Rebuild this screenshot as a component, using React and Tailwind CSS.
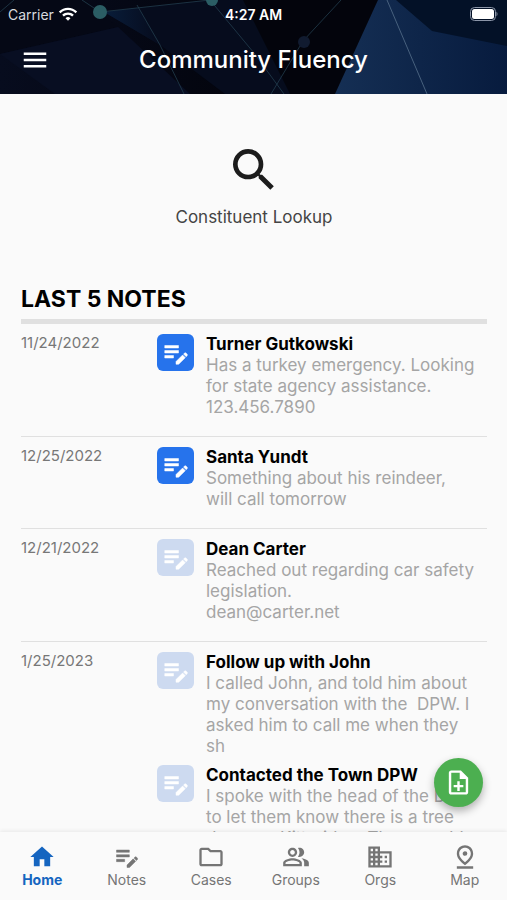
import { MdMenu, MdSearch, MdHome, MdOutlineFolder, MdOutlineDomain, MdOutlinePinDrop, MdOutlineNoteAdd, MdWifi } from "react-icons/md";

const groups = [
  {
    date: "11/24/2022",
    notes: [{ title: "Turner Gutkowski", unread: true, lines: ["Has a turkey emergency. Looking", "for state agency assistance.", "123.456.7890"] }],
  },
  {
    date: "12/25/2022",
    notes: [{ title: "Santa Yundt", unread: true, lines: ["Something about his reindeer,", "will call tomorrow"] }],
  },
  {
    date: "12/21/2022",
    notes: [{ title: "Dean Carter", lines: ["Reached out regarding car safety", "legislation.", "dean@carter.net"] }],
  },
  {
    date: "1/25/2023",
    notes: [
      { title: "Follow up with John", lines: ["I called John, and told him about", "my conversation with the  DPW. I", "asked him to call me when they", "sh"] },
      { title: "Contacted the Town DPW", lines: ["I spoke with the head of the DPW", "to let them know there is a tree", "down on Kitteridge. There could"] },
    ],
  },
];

function EditNoteIcon({ className }) {
  return (
    <svg className={className} viewBox="0 0 24 24" fill="currentColor" stroke="currentColor" strokeWidth="0.4" aria-hidden="true">
      <path d="M3 10h11v2H3zM3 6h11v2H3zM3 14h7v2H3z" />
      <path d="M18.010 12.870l.71-.71c.39-.39 1.020-.39 1.410 0l.71.71c.39.39.39 1.020 0 1.410l-.71.71z" />
      <path d="M17.300 13.580l-5.300 5.300V21h2.120l5.300-5.300z" />
    </svg>
  );
}

function PeopleIcon({ className }) {
  return (
    <svg className={className} viewBox="0 0 24 24" fill="currentColor" aria-hidden="true">
      <path d="M16.670 13.130C18.040 14.060 19 15.320 19 17v3h4v-3c0-2.180-3.570-3.470-6.330-3.870z" />
      <path d="M15 12c2.210 0 4-1.790 4-4s-1.790-4-4-4c-.47 0-.91.1-1.330.24C14.500 5.270 15 6.580 15 8s-.5 2.730-1.330 3.760c.42.14.86.24 1.330.24z" />
      <path fillRule="evenodd" d="M9 12c2.210 0 4-1.790 4-4s-1.790-4-4-4-4 1.790-4 4 1.790 4 4 4zm0-6c1.100 0 2 .9 2 2s-.9 2-2 2-2-.9-2-2 .9-2 2-2z" />
      <path fillRule="evenodd" d="M9 13c-2.670 0-8 1.340-8 4v3h16v-3c0-2.660-5.330-4-8-4zm6 5H3v-.99C3.200 16.290 6.300 15 9 15s5.800 1.290 6 2v1z" />
    </svg>
  );
}

const tabs = [
  { label: "Home", Icon: MdHome, active: true },
  { label: "Notes", Icon: EditNoteIcon },
  { label: "Cases", Icon: MdOutlineFolder },
  { label: "Groups", Icon: PeopleIcon },
  { label: "Orgs", Icon: MdOutlineDomain },
  { label: "Map", Icon: MdOutlinePinDrop },
];

function HeaderArt() {
  return (
    <svg className="absolute inset-0 h-full w-full" viewBox="0 0 507 94" preserveAspectRatio="none" aria-hidden="true">
      <defs>
        <linearGradient id="base" x1="0" x2="1">
          <stop offset="0" stopColor="#070c1e" />
          <stop offset="0.5" stopColor="#03040c" />
          <stop offset="0.7" stopColor="#03040c" />
        </linearGradient>
        <linearGradient id="ray" x1="0" x2="1">
          <stop offset="0" stopColor="#152f54" />
          <stop offset="1" stopColor="#071b3e" />
        </linearGradient>
        <linearGradient id="facet" x1="0" x2="1">
          <stop offset="0" stopColor="#091d3a" />
          <stop offset="1" stopColor="#060b1c" />
        </linearGradient>
      </defs>
      <rect width="507" height="94" fill="url(#base)" />
      <path d="M0 0H85L118 27L0 54Z" fill="#050815" />
      <path d="M0 54L118 27L190 94H55Z" fill="#080e22" />
      <path d="M104 12L210 0H243L290 94H225L160 45Z" fill="#060c1d" />
      <path d="M104 12L138 8L160 45Z" fill="url(#facet)" />
      <path d="M378 0H507V94H335Z" fill="url(#ray)" />
      <path d="M396 0H507V46L432 31Z" fill="#031127" />
      <path d="M14 0L0 12M82 0L100 12L210 0L254 53L284 94M137 5L160 45L184 94M341 0L303 41L271 94" fill="none" stroke="#264456" strokeWidth="1" opacity="0.7" />
      <path d="M387 0L427 94" stroke="#48617e" strokeWidth="1" />
      <circle cx="100" cy="12" r="7" fill="#2b5d64" />
      <circle cx="212" cy="0" r="6" fill="#2b5d64" />
      <circle cx="304" cy="42" r="6" fill="#111b30" />
    </svg>
  );
}

function Battery() {
  return (
    <svg className="h-4 w-8" viewBox="0 0 32 16" aria-label="Battery full" role="img">
      <rect x="3.5" y="1.5" width="25" height="13" rx="4" fill="none" stroke="#8b95a8" />
      <rect x="5" y="3" width="22" height="10" rx="2.5" fill="#fff" />
      <path d="M29.500 5.500Q31.500 8 29.500 10.500Z" fill="#8b95a8" />
    </svg>
  );
}

function Note({ title, lines, unread }) {
  return (
    <article className="flex gap-3">
      <div className={`flex size-[37px] shrink-0 items-center justify-center rounded-md text-white ${unread ? "bg-[#2673ec]" : "bg-[#cddaf0]"}`}>
        <EditNoteIcon className="size-[30px]" />
      </div>
      <div className="min-w-0 whitespace-pre">
        <h3 className="text-[17px] leading-[21px] font-bold text-black">{title}</h3>
        {lines.map((line) => (
          <p key={line} className="text-[17px] leading-[21px] text-[#a5a5a5]">{line}</p>
        ))}
      </div>
    </article>
  );
}

export default function App() {
  return (
    <div className="relative flex h-screen flex-col overflow-hidden bg-[#fafafa] font-['Inter','Liberation_Sans',sans-serif]">
      <header className="relative h-[94px] shrink-0 overflow-hidden text-white">
        <HeaderArt />
        <div className="relative grid h-7 grid-cols-3 items-center px-2 text-[14px]">
          <div className="flex items-center gap-1 text-[#d8dade]">
            <span>Carrier</span>
            <MdWifi className="size-5 text-white" aria-label="Wi-Fi" />
          </div>
          <span className="text-center font-semibold">4:27 AM</span>
          <span className="flex justify-end"><Battery /></span>
        </div>
        <div className="relative grid h-16 grid-cols-[70px_1fr_70px] items-center">
          <button type="button" aria-label="Open menu" className="flex justify-center">
            <MdMenu className="size-[30px]" />
          </button>
          <h1 className="text-center text-2xl font-medium">Community Fluency</h1>
        </div>
      </header>

      <main className="min-h-0 flex-1 overflow-hidden pr-5 pl-[21px]">
        <div className="flex justify-center pt-12">
          <button type="button" className="flex flex-col items-center gap-[9px] text-[#444]">
            <MdSearch className="size-[56px] text-[#1c1c1c]" aria-hidden="true" />
            <span className="text-[17px] leading-[21px]">Constituent Lookup</span>
          </button>
        </div>
        <section className="pt-[58px]">
          <h2 className="border-b-[5px] border-[#e0e0e0] pb-[7px] text-[23px] leading-[26px] font-bold text-black">LAST 5 NOTES</h2>
          {groups.map((group) => (
            <div key={group.date} className="flex border-b border-[#e0e0e0] pt-[10px] pb-[18px]">
              <time className="w-[136px] shrink-0 text-[15px] leading-[18px] text-[#777]">{group.date}</time>
              <div className="flex min-w-0 flex-1 flex-col gap-2">
                {group.notes.map((note) => (
                  <Note key={note.title} {...note} />
                ))}
              </div>
            </div>
          ))}
        </section>
      </main>

      <button type="button" aria-label="Add note" className="absolute right-6 bottom-[93px] flex size-[49px] items-center justify-center rounded-full bg-[#4caf50] text-white shadow-[0_4px_8px_rgba(0,0,0,0.3)]">
        <MdOutlineNoteAdd className="size-[29px]" />
      </button>

      <nav className="relative grid h-[68px] shrink-0 grid-cols-6 bg-[#fafafa] shadow-[0_-1px_4px_rgba(0,0,0,0.08)]">
        {tabs.map(({ label, Icon, active }) => (
          <a key={label} href="#" aria-current={active ? "page" : undefined} className={`flex flex-col items-center pt-[11px] text-[14px] leading-[18px] ${active ? "font-bold text-[#1565c0]" : "text-[#757575]"}`}>
            <Icon className="size-7" aria-hidden="true" />
            <span>{label}</span>
          </a>
        ))}
      </nav>
    </div>
  );
}
